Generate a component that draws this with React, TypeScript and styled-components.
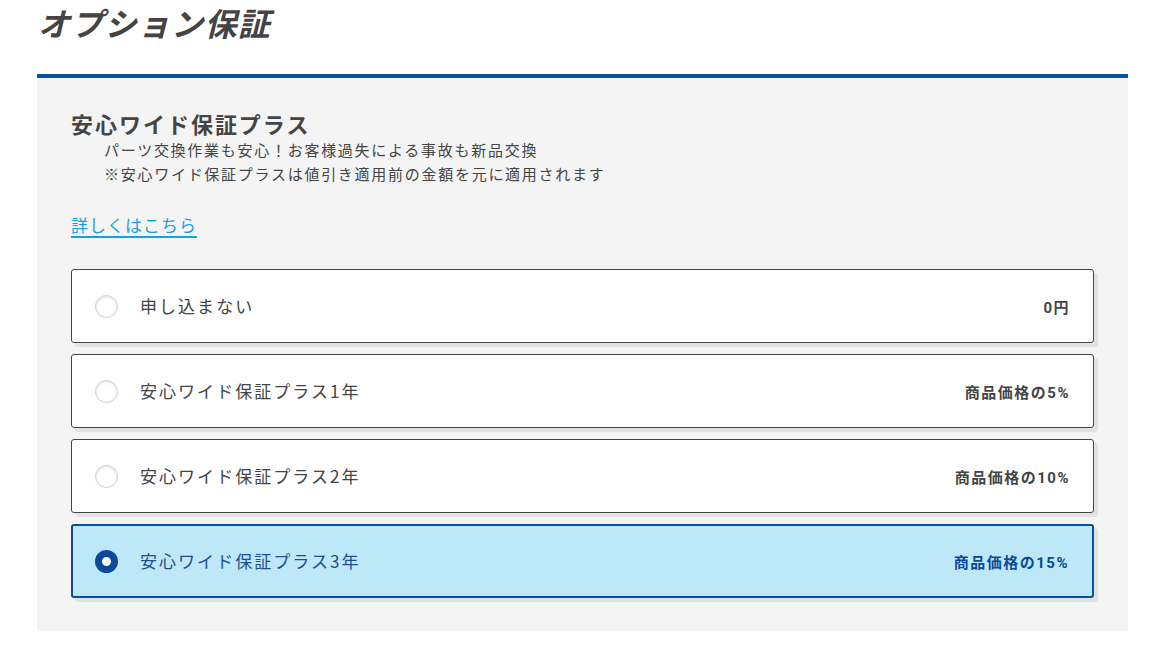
import { useState } from "react"
import styled, { createGlobalStyle } from "styled-components"

const GlobalStyle = createGlobalStyle`
    body {
        margin: 0;
        background: #ffffff;
        font-family: "Noto Sans CJK JP", "Noto Sans", sans-serif;
        color: #444444;
    }
`

interface Plan {
    id: string
    label: string
    price: string
}

const plans: Plan[] = [
    { id: "none", label: "申し込まない", price: "0円" },
    { id: "1y", label: "安心ワイド保証プラス1年", price: "商品価格の5%" },
    { id: "2y", label: "安心ワイド保証プラス2年", price: "商品価格の10%" },
    { id: "3y", label: "安心ワイド保証プラス3年", price: "商品価格の15%" },
]

export default function App() {
    const [selected, setSelected] = useState("3y")

    return (
        <>
            <GlobalStyle />
            <Page>
                <PageTitle>オプション保証</PageTitle>
                <Panel>
                    <Heading>安心ワイド保証プラス</Heading>
                    <Notes>
                        <p>パーツ交換作業も安心！お客様過失による事故も新品交換</p>
                        <p>※安心ワイド保証プラスは値引き適用前の金額を元に適用されます</p>
                    </Notes>
                    <DetailLink href="#">詳しくはこちら</DetailLink>
                    <Options>
                        {plans.map(plan => {
                            const active = plan.id === selected
                            return (
                                <Option key={plan.id} $active={active}>
                                    <HiddenInput
                                        type="radio"
                                        name="warranty"
                                        checked={active}
                                        onChange={() => setSelected(plan.id)}
                                    />
                                    <Radio $active={active} aria-hidden />
                                    <Label $active={active}>{plan.label}</Label>
                                    <Price $active={active}>{plan.price}</Price>
                                </Option>
                            )
                        })}
                    </Options>
                </Panel>
            </Page>
        </>
    )
}

const Page = styled.div`
    width: 1091px;
    padding-left: 37px;
`

const PageTitle = styled.h1`
    margin: 0;
    padding: 2px 0 0 1px;
    height: 72px;
    font-size: 32px;
    font-weight: 700;
    font-style: italic;
    line-height: 40px;
    color: #444444;
    letter-spacing: 0.04em;
`

const Panel = styled.section`
    background: #f4f4f4;
    border-top: 4px solid #0a4fa0;
    padding: 31px 34px 33px;
`

const Heading = styled.h2`
    margin: 0;
    font-size: 22px;
    font-weight: 700;
    line-height: 29px;
    color: #444444;
    letter-spacing: 0.09em;
`

const Notes = styled.div`
    padding-left: 33px;
    font-size: 15px;
    line-height: 24px;
    color: #444444;
    letter-spacing: 0.115em;

    p {
        margin: 0;
    }
`

const DetailLink = styled.a`
    display: inline-block;
    margin-top: 28px;
    font-size: 17px;
    line-height: 22px;
    color: #1d9fdf;
    text-decoration: none;
    border-bottom: 2px solid #1d9fdf;
    letter-spacing: 0.06em;
`

const Options = styled.div`
    display: flex;
    flex-direction: column;
    gap: 11px;
    margin-top: 31px;
`

const Option = styled.label<{ $active: boolean }>`
    display: flex;
    align-items: center;
    height: 74px;
    box-sizing: border-box;
    padding: 0 23px 0 ${p => (p.$active ? 22 : 23)}px;
    background: ${p => (p.$active ? "#bee7f8" : "#ffffff")};
    border: ${p => (p.$active ? "2px solid #0a4fa0" : "1px solid #444444")};
    border-radius: 3px;
    box-shadow: 4px 4px 0 #e2e2e2;
    cursor: pointer;
`

const HiddenInput = styled.input`
    position: absolute;
    opacity: 0;
    width: 0;
    height: 0;
`

const Radio = styled.span<{ $active: boolean }>`
    flex: none;
    width: 23px;
    height: 23px;
    box-sizing: border-box;
    border-radius: 50%;
    background: #ffffff;
    border: ${p => (p.$active ? "7.5px solid #0a4a98" : "1px solid #cfcfcf")};
    box-shadow: ${p => (p.$active ? "none" : "inset 0 1px 3px rgba(0, 0, 0, 0.12)")};
`

const Label = styled.span<{ $active: boolean }>`
    flex: 1;
    margin-left: 22px;
    font-size: 17px;
    line-height: 24px;
    color: ${p => (p.$active ? "#1d4f8c" : "#444444")};
    letter-spacing: 0.12em;
`

const Price = styled.span<{ $active: boolean }>`
    font-family: Roboto, "Noto Sans CJK JP", sans-serif;
    font-size: 15px;
    font-weight: 700;
    color: ${p => (p.$active ? "#0a4a98" : "#444444")};
    letter-spacing: 0.1em;
`
